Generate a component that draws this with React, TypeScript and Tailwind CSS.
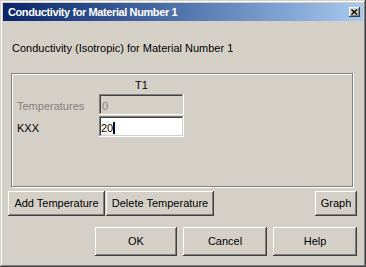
const raised =
  "shadow-[inset_-1px_-1px_#404040,inset_1px_1px_#ffffff,inset_-2px_-2px_#808080,inset_2px_2px_#d4d0c8]";
const sunken =
  "shadow-[inset_-1px_-1px_#ffffff,inset_1px_1px_#808080,inset_-2px_-2px_#d4d0c8,inset_2px_2px_#404040]";

function Button({ label, className = "" }: { label: string; className?: string }) {
  return (
    <button
      className={`${raised} bg-[#d4d0c8] flex items-center justify-center leading-[13px] text-black ${className}`}
    >
      {label}
    </button>
  );
}

export default function App() {
  return (
    <div className="w-[366px] h-[267px] bg-[#d4d0c8] p-[3px] flex flex-col font-['Liberation_Sans',Arial,sans-serif] text-[11px] text-black shadow-[inset_-1px_-1px_#404040,inset_1px_1px_#d4d0c8,inset_-2px_-2px_#808080,inset_2px_2px_#ffffff]">
      {/* title bar */}
      <div className="h-[18px] flex items-center pl-[5px] pr-[3px] bg-gradient-to-r from-[#0a246a] to-[#a6caf0]">
        <span className="text-white font-bold text-[11px] tracking-[-0.4px] leading-[14px]">
          Conductivity for Material Number 1
        </span>
        <div className={`ml-auto w-[11px] h-[10px] bg-[#d4d0c8] ${raised} flex items-center justify-center`}>
          <svg width="7" height="6" viewBox="0 0 7 6">
            <path d="M0.5 0.5 L6 5.5 M6 0.5 L0.5 5.5" stroke="#000" strokeWidth="1.4" />
          </svg>
        </div>
      </div>

      <div className="flex flex-col pl-[5px] pr-[6px]">
        <p className="mt-[21px] pl-[4px] leading-[13px]">
          Conductivity (Isotropic) for Material Number 1
        </p>

        {/* property group */}
        <div className="mt-[18px] ml-[3px] w-[342px] h-[114px] border border-[#808080] shadow-[inset_1px_1px_#ffffff,1px_1px_#ffffff] pl-[5px] pt-[5px]">
          <div className="flex leading-[13px]">
            <div className="w-[82px]" />
            <div className="w-[85px] text-center">T1</div>
          </div>
          <div className="flex h-[21px] mt-[2px]">
            <div className="w-[82px] pt-[6px] leading-[13px] text-[#808080]">Temperatures</div>
            <div className={`w-[85px] h-[21px] bg-[#d4d0c8] ${sunken} pl-[3px] pt-[6px] leading-[13px] text-[#808080]`}>
              0
            </div>
          </div>
          <div className="flex h-[21px] mt-[1px]">
            <div className="w-[82px] pt-[6px] leading-[13px]">KXX</div>
            <div className={`w-[85px] h-[21px] bg-white ${sunken} pl-[2px] pt-[5px] flex items-start`}>
              <span className="leading-[13px] pt-[1px]">20</span>
              <span className="w-[2px] h-[12px] bg-black mt-[1px]" />
            </div>
          </div>
        </div>

        <div className="flex h-[25px] mt-[4px]">
          <Button label="Add Temperature" className="w-[97px]" />
          <Button label="Delete Temperature" className="w-[108px] ml-[1px]" />
          <Button label="Graph" className="w-[42px] ml-auto" />
        </div>

        <div className="flex justify-end gap-[6px] h-[29px] mt-[11px]">
          <Button label="OK" className="w-[82px]" />
          <Button label="Cancel" className="w-[84px]" />
          <Button label="Help" className="w-[84px]" />
        </div>
      </div>
    </div>
  );
}
